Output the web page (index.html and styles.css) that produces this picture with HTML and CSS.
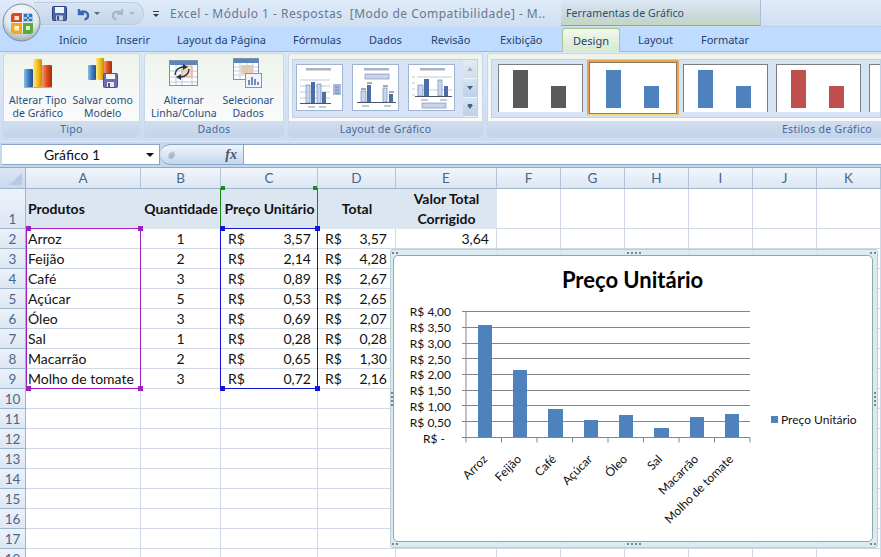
FILE: index.html
```html
<!DOCTYPE html>
<html lang="pt">
<head>
<meta charset="utf-8">
<title>Excel - Módulo 1 - Respostas</title>
<link rel="stylesheet" href="styles.css">
</head>
<body>
<div class="app">
  <div class="office-btn">
    <svg width="40" height="40" viewBox="0 0 40 40">
      <defs>
        <radialGradient id="orb" cx="50%" cy="30%" r="70%"><stop offset="0" stop-color="#fbfcfd"/><stop offset=".65" stop-color="#dfe6ec"/><stop offset="1" stop-color="#9fadb9"/></radialGradient>
      </defs>
      <circle cx="19.500" cy="19.500" r="18.500" fill="url(#orb)" stroke="#7d8c99"/>
      <path d="M9 13q0-3 3-3h8v9H9z" fill="#d9482b"/>
      <rect x="12.500" y="13" width="4.500" height="4" fill="#fbe6c4"/>
      <path d="M21 10h7q3 0 3 3v6H21z" fill="#9fc4e6"/>
      <path d="M22 11h3v3h-3zM27 11h3v3h-3zM25 14h2v2h-2zM22 16h3v2h-3zM27 16h3v2h-3z" fill="#2f75bb"/>
      <path d="M9 20h11v11h-8q-3 0-3-3z" fill="#f3a91f"/>
      <rect x="12.500" y="23" width="4.500" height="4.500" fill="#fff3c6"/>
      <path d="M21 20h10v8q0 3-3 3h-7z" fill="#5aaa3a"/>
      <rect x="24" y="23" width="4" height="4" fill="#dcf0cc"/>
    </svg>
  </div>

  <header class="titlebar">
    <div class="qat">
      <svg class="qat-save" width="15" height="15" viewBox="0 0 15 15"><rect x=".5" y=".5" width="14" height="14" rx="1" fill="#4667a8" stroke="#2b3f75"/><rect x="3" y="1" width="9" height="6" fill="#eef2fa"/><rect x="4" y="9.500" width="7" height="5" fill="#c7d0e4"/><rect x="5" y="10" width="2" height="4" fill="#3c5697"/></svg>
      <svg class="qat-undo" width="14" height="14" viewBox="0 0 14 14"><path d="M3 2v5h5M3.500 6.500C6 3.500 11.500 4 12 8c.3 2.500-1.500 4-3.500 4.500" fill="none" stroke="#3b68b0" stroke-width="2.400"/></svg>
      <span class="qat-caret"></span>
      <svg class="qat-redo" width="14" height="14" viewBox="0 0 14 14"><path d="M11 2v5H6M10.500 6.500C8 3.500 2.500 4 2 8c-.3 2.500 1.500 4 3.500 4.500" fill="none" stroke="#a5b7c9" stroke-width="2.200"/></svg>
      <span class="qat-caret qat-caret-off"></span>
    </div>
    <div class="qat-more"><span class="qat-bar"></span><span class="qat-caret qat-caret-dark"></span></div>
    <div class="doc-title">Excel - Módulo 1 - Respostas&nbsp; [Modo de Compatibilidade] - M..</div>
    <div class="context-title">Ferramentas de Gráfico</div>
    <div class="title-rest"></div>
  </header>

  <nav class="tabs">
    <span class="tab tab-inicio">Início</span>
    <span class="tab tab-inserir">Inserir</span>
    <span class="tab tab-layout-pg">Layout da Página</span>
    <span class="tab tab-formulas">Fórmulas</span>
    <span class="tab tab-dados">Dados</span>
    <span class="tab tab-revisao">Revisão</span>
    <span class="tab tab-exibicao">Exibição</span>
    <span class="tab tab-design">Design</span>
    <span class="tab tab-layout">Layout</span>
    <span class="tab tab-formatar">Formatar</span>
  </nav>

  <section class="ribbon">
    <div class="group group-tipo">
      <div class="group-body">
        <div class="big-btn">
          <svg width="30" height="30" viewBox="0 0 30 30">
            <defs>
              <linearGradient id="gb"><stop offset="0" stop-color="#8dbce6"/><stop offset=".5" stop-color="#3d7fc2"/><stop offset="1" stop-color="#1f4f8f"/></linearGradient>
              <linearGradient id="gy"><stop offset="0" stop-color="#fcec8a"/><stop offset=".5" stop-color="#f2c020"/><stop offset="1" stop-color="#c98a0a"/></linearGradient>
              <linearGradient id="gr"><stop offset="0" stop-color="#f59a6a"/><stop offset=".5" stop-color="#de4a1e"/><stop offset="1" stop-color="#a82c0c"/></linearGradient>
            </defs>
            <rect x="1" y="11" width="9" height="18" rx="1" fill="url(#gb)"/>
            <rect x="19" y="7" width="10" height="22" rx="1" fill="url(#gr)"/>
            <rect x="10" y="1" width="9" height="28" rx="1.500" fill="url(#gy)"/>
            <rect x="1" y="29" width="28" height="1" fill="#a8acb4"/>
          </svg>
          <span class="btn-label">Alterar Tipo<br>de Gráfico</span>
        </div>
        <div class="big-btn">
          <svg width="30" height="30" viewBox="0 0 30 30">
            <rect x="0" y="7" width="8" height="15" rx="1" fill="url(#gb)"/>
            <rect x="16" y="3" width="8" height="19" rx="1" fill="url(#gr)"/>
            <rect x="8" y="0" width="8" height="22" rx="1" fill="url(#gy)"/>
            <rect x="15.500" y="15.500" width="14" height="14" rx="1" fill="#6f6cb2" stroke="#514e92"/>
            <rect x="18" y="16" width="9" height="5" fill="#f4f4fb"/>
            <rect x="19" y="24" width="7" height="5" fill="#e8e8f2"/><rect x="20" y="25" width="2" height="4" fill="#57549a"/>
          </svg>
          <span class="btn-label">Salvar como<br>Modelo</span>
        </div>
      </div>
      <div class="group-label">Tipo</div>
    </div>

    <div class="group group-dados">
      <div class="group-body">
        <div class="big-btn">
          <svg width="30" height="30" viewBox="0 0 30 30">
            <rect x=".5" y="2.500" width="28" height="25" fill="#fff" stroke="#7d93ad"/>
            <rect x="1" y="3" width="27" height="4" fill="#5c86b8"/>
            <path d="M13 8h10v11H13z" fill="#fbdcbc"/>
            <path d="M1 13h27M1 19h27M1 24h27M7 7v20M13 7v20M23 7v20" stroke="#b9c8da" fill="none"/>
            <path d="M13 8h10v11H13z" fill="none" stroke="#f0b27a"/>
            <path d="M6 17c0-5 4-8 9-8" fill="none" stroke="#26364e" stroke-width="1.400"/><path d="M14 6l5 3-5 3z" fill="#26364e"/>
            <path d="M20 11c0 5-4 8-9 8" fill="none" stroke="#26364e" stroke-width="1.400"/><path d="M12 16l-5 3 5 3z" fill="#26364e"/>
          </svg>
          <span class="btn-label">Alternar<br>Linha/Coluna</span>
        </div>
        <div class="big-btn">
          <svg width="30" height="30" viewBox="0 0 30 30">
            <rect x=".5" y=".5" width="25" height="21" fill="#fff" stroke="#7d93ad"/>
            <rect x="1" y="1" width="24" height="4" fill="#5c86b8"/>
            <rect x="8" y="7" width="12" height="9" fill="#f9c996"/>
            <path d="M1 9h24M1 13h24M1 17h24M7 5v16M14 5v16M20 5v16" stroke="#c3cfde" fill="none"/>
            <rect x="12.500" y="15.500" width="16" height="14" fill="#f0f4fa" stroke="#8497af"/>
            <path d="M15 27v-5h2v5zM18 27v-8h2v8zM21 27v-6h2v6zM24 27v-3h2v3z" fill="#6f8fb8"/>
          </svg>
          <span class="btn-label">Selecionar<br>Dados</span>
        </div>
      </div>
      <div class="group-label">Dados</div>
    </div>

    <div class="group group-layout">
      <div class="group-body group-body-gallery">
        <div class="gallery gallery-layout">
          <div class="layout-thumb">
            <svg width="45" height="45" viewBox="0 0 45 45"><rect x="9" y="3" width="25" height="2.500" fill="#a9b4ca"/><path d="M3 15h30M3 21h30M3 27h30M3 33h30" stroke="#c3c9d6" fill="none"/><rect x="9" y="20" width="4" height="18" fill="#c9d6ec" stroke="#5f7fb5" stroke-width=".6"/><rect x="14" y="17" width="4" height="21" fill="#4b6ea8"/><rect x="20" y="19" width="4" height="19" fill="#c9d6ec" stroke="#5f7fb5" stroke-width=".6"/><rect x="25" y="27" width="4" height="11" fill="#4b6ea8"/><rect x="3" y="38" width="31" height="1" fill="#4c5565"/><path d="M11 42h7M22 42h7" stroke="#8b93a5"/><rect x="36" y="19" width="8" height="11" fill="#a9bad6"/><path d="M38 22h4M38 25h4M38 28h4" stroke="#5f7fb5" stroke-width=".8"/></svg>
          </div>
          <div class="layout-thumb">
            <svg width="45" height="45" viewBox="0 0 45 45"><rect x="11" y="3" width="25" height="2.500" fill="#a9b4ca"/><rect x="12" y="9" width="24" height="5" fill="#c8d5ec" stroke="#6f87b0" stroke-width=".6"/><rect x="8" y="26" width="5" height="11" fill="#c9d6ec" stroke="#5f7fb5" stroke-width=".6"/><rect x="14" y="20" width="4" height="17" fill="#4b6ea8"/><rect x="30" y="23" width="4" height="14" fill="#c9d6ec" stroke="#5f7fb5" stroke-width=".6"/><rect x="36" y="29" width="4" height="8" fill="#4b6ea8"/><rect x="4" y="37" width="39" height="1" fill="#4c5565"/><path d="M8 24h5M14 18h5M30 21h5M36 27h5" stroke="#4c5565"/><path d="M9 41h7M31 41h7" stroke="#8b93a5"/></svg>
          </div>
          <div class="layout-thumb">
            <svg width="45" height="45" viewBox="0 0 45 45"><rect x="11" y="3" width="25" height="2.500" fill="#a9b4ca"/><path d="M3 12h3M3 18h3M3 24h3M3 30h3M8 12h35M8 25h35" stroke="#c3c9d6" fill="none"/><rect x="9" y="20" width="5" height="11" fill="#c9d6ec" stroke="#5f7fb5" stroke-width=".6"/><rect x="15" y="14" width="5" height="17" fill="#4b6ea8"/><rect x="29" y="15" width="4" height="16" fill="#c9d6ec" stroke="#5f7fb5" stroke-width=".6"/><rect x="35" y="21" width="4" height="10" fill="#4b6ea8"/><rect x="6" y="31" width="37" height="1" fill="#4c5565"/><path d="M12 35h7M31 35h7" stroke="#8b93a5"/><rect x="13" y="38" width="24" height="5" fill="#c8d5ec" stroke="#6f87b0" stroke-width=".6"/></svg>
          </div>
          <div class="scroller">
            <span class="scroll-btn"><i class="tri tri-up"></i></span>
            <span class="scroll-btn scroll-btn-on"><i class="tri tri-down"></i></span>
            <span class="scroll-btn scroll-btn-on"><i class="tri tri-more"></i></span>
          </div>
        </div>
      </div>
      <div class="group-label">Layout de Gráfico</div>
    </div>

    <div class="group group-styles">
      <div class="group-body group-body-gallery">
        <div class="gallery gallery-styles">
          <div class="style-thumb"><span class="bar bar-hi bar-gray"></span><span class="bar bar-lo bar-gray"></span></div>
          <div class="style-thumb style-selected"><span class="bar bar-hi bar-blue"></span><span class="bar bar-lo bar-blue"></span></div>
          <div class="style-thumb"><span class="bar bar-hi bar-blue"></span><span class="bar bar-lo bar-blue"></span></div>
          <div class="style-thumb"><span class="bar bar-hi bar-red"></span><span class="bar bar-lo bar-red"></span></div>
          <div class="style-thumb"></div>
        </div>
      </div>
      <div class="group-label group-label-right">Estilos de Gráfico</div>
    </div>
  </section>

  <section class="formula-bar">
    <div class="name-box"><span class="name-text">Gráfico 1</span><i class="name-caret"></i></div>
    <div class="fx-box"><i class="fx-dot"></i><span class="fx">fx</span></div>
    <div class="formula-input"></div>
  </section>

  <main class="sheet">
    <div class="grid">
      <div class="corner"><i class="corner-tri"></i></div>
      <div class="ch">A</div><div class="ch">B</div><div class="ch">C</div><div class="ch">D</div><div class="ch">E</div><div class="ch">F</div><div class="ch">G</div><div class="ch">H</div><div class="ch">I</div><div class="ch">J</div><div class="ch">K</div>

      <div class="rh rh-tall">1</div>
      <div class="c hd hd-left">Produtos</div><div class="c hd">Quantidade</div><div class="c hd">Preço Unitário</div><div class="c hd">Total</div><div class="c hd hd-wrap">Valor Total<br>Corrigido</div><div class="c"></div><div class="c"></div><div class="c"></div><div class="c"></div><div class="c"></div><div class="c"></div>

      <div class="rh">2</div><div class="c">Arroz</div><div class="c ctr">1</div><div class="c cur"><span>R$</span><span>3,57</span></div><div class="c cur cur-d"><span>R$</span><span>3,57</span></div><div class="c num">3,64</div><div class="c"></div><div class="c"></div><div class="c"></div><div class="c"></div><div class="c"></div><div class="c"></div>
      <div class="rh">3</div><div class="c">Feijão</div><div class="c ctr">2</div><div class="c cur"><span>R$</span><span>2,14</span></div><div class="c cur cur-d"><span>R$</span><span>4,28</span></div><div class="c num"></div><div class="c"></div><div class="c"></div><div class="c"></div><div class="c"></div><div class="c"></div><div class="c"></div>
      <div class="rh">4</div><div class="c">Café</div><div class="c ctr">3</div><div class="c cur"><span>R$</span><span>0,89</span></div><div class="c cur cur-d"><span>R$</span><span>2,67</span></div><div class="c num"></div><div class="c"></div><div class="c"></div><div class="c"></div><div class="c"></div><div class="c"></div><div class="c"></div>
      <div class="rh">5</div><div class="c">Açúcar</div><div class="c ctr">5</div><div class="c cur"><span>R$</span><span>0,53</span></div><div class="c cur cur-d"><span>R$</span><span>2,65</span></div><div class="c num"></div><div class="c"></div><div class="c"></div><div class="c"></div><div class="c"></div><div class="c"></div><div class="c"></div>
      <div class="rh">6</div><div class="c">Óleo</div><div class="c ctr">3</div><div class="c cur"><span>R$</span><span>0,69</span></div><div class="c cur cur-d"><span>R$</span><span>2,07</span></div><div class="c num"></div><div class="c"></div><div class="c"></div><div class="c"></div><div class="c"></div><div class="c"></div><div class="c"></div>
      <div class="rh">7</div><div class="c">Sal</div><div class="c ctr">1</div><div class="c cur"><span>R$</span><span>0,28</span></div><div class="c cur cur-d"><span>R$</span><span>0,28</span></div><div class="c num"></div><div class="c"></div><div class="c"></div><div class="c"></div><div class="c"></div><div class="c"></div><div class="c"></div>
      <div class="rh">8</div><div class="c">Macarrão</div><div class="c ctr">2</div><div class="c cur"><span>R$</span><span>0,65</span></div><div class="c cur cur-d"><span>R$</span><span>1,30</span></div><div class="c num"></div><div class="c"></div><div class="c"></div><div class="c"></div><div class="c"></div><div class="c"></div><div class="c"></div>
      <div class="rh">9</div><div class="c">Molho de tomate</div><div class="c ctr">3</div><div class="c cur"><span>R$</span><span>0,72</span></div><div class="c cur cur-d"><span>R$</span><span>2,16</span></div><div class="c num"></div><div class="c"></div><div class="c"></div><div class="c"></div><div class="c"></div><div class="c"></div><div class="c"></div>

      <div class="rh">10</div><div class="c"></div><div class="c"></div><div class="c"></div><div class="c"></div><div class="c"></div><div class="c"></div><div class="c"></div><div class="c"></div><div class="c"></div><div class="c"></div><div class="c"></div>
      <div class="rh">11</div><div class="c"></div><div class="c"></div><div class="c"></div><div class="c"></div><div class="c"></div><div class="c"></div><div class="c"></div><div class="c"></div><div class="c"></div><div class="c"></div><div class="c"></div>
      <div class="rh">12</div><div class="c"></div><div class="c"></div><div class="c"></div><div class="c"></div><div class="c"></div><div class="c"></div><div class="c"></div><div class="c"></div><div class="c"></div><div class="c"></div><div class="c"></div>
      <div class="rh">13</div><div class="c"></div><div class="c"></div><div class="c"></div><div class="c"></div><div class="c"></div><div class="c"></div><div class="c"></div><div class="c"></div><div class="c"></div><div class="c"></div><div class="c"></div>
      <div class="rh">14</div><div class="c"></div><div class="c"></div><div class="c"></div><div class="c"></div><div class="c"></div><div class="c"></div><div class="c"></div><div class="c"></div><div class="c"></div><div class="c"></div><div class="c"></div>
      <div class="rh">15</div><div class="c"></div><div class="c"></div><div class="c"></div><div class="c"></div><div class="c"></div><div class="c"></div><div class="c"></div><div class="c"></div><div class="c"></div><div class="c"></div><div class="c"></div>
      <div class="rh">16</div><div class="c"></div><div class="c"></div><div class="c"></div><div class="c"></div><div class="c"></div><div class="c"></div><div class="c"></div><div class="c"></div><div class="c"></div><div class="c"></div><div class="c"></div>
      <div class="rh">17</div><div class="c"></div><div class="c"></div><div class="c"></div><div class="c"></div><div class="c"></div><div class="c"></div><div class="c"></div><div class="c"></div><div class="c"></div><div class="c"></div><div class="c"></div>
      <div class="rh">18</div><div class="c"></div><div class="c"></div><div class="c"></div><div class="c"></div><div class="c"></div><div class="c"></div><div class="c"></div><div class="c"></div><div class="c"></div><div class="c"></div><div class="c"></div>
    </div>

    <div class="sel sel-green"><i class="h h-tl"></i><i class="h h-tr"></i></div>
    <div class="sel sel-purple"><i class="h h-tl"></i><i class="h h-tr"></i><i class="h h-bl"></i><i class="h h-br"></i></div>
    <div class="sel sel-blue"><i class="h h-tl"></i><i class="h h-tr"></i><i class="h h-bl"></i><i class="h h-br"></i></div>

    <div class="chart">
      <svg class="chart-svg" width="491" height="302" viewBox="388 248 491 302">
        <text class="ct-title" x="632.500" y="288" text-anchor="middle">Preço Unitário</text>
        <g class="grid-lines">
          <path d="M466 311.500H750M466 327.500H750M466 343.500H750M466 358.500H750M466 374.500H750M466 390.500H750M466 405.500H750M466 421.500H750"/>
          <path class="axis" d="M466 311V437.500H750M466 437.500v5M501.500 437.500v5M537 437.500v5M572.500 437.500v5M608 437.500v5M643.500 437.500v5M679 437.500v5M714.500 437.500v5M750 437.500v5"/>
          <path class="axis" d="M462 311.500h4M462 327.500h4M462 343.500h4M462 358.500h4M462 374.500h4M462 390.500h4M462 405.500h4M462 421.500h4M462 437.500h4"/>
        </g>
        <g class="bars">
          <rect x="478" y="325" width="14" height="112"/>
          <rect x="513" y="370" width="14" height="67"/>
          <rect x="548" y="409" width="15" height="28"/>
          <rect x="584" y="420" width="14" height="17"/>
          <rect x="619" y="415" width="14" height="22"/>
          <rect x="654" y="428" width="15" height="9"/>
          <rect x="690" y="417" width="14" height="20"/>
          <rect x="725" y="414" width="14" height="23"/>
        </g>
        <g class="y-labels" text-anchor="end">
          <text x="451" y="316">R$ 4,00</text><text x="451" y="332">R$ 3,50</text><text x="451" y="348">R$ 3,00</text><text x="451" y="364">R$ 2,50</text><text x="451" y="379">R$ 2,00</text><text x="451" y="395">R$ 1,50</text><text x="451" y="411">R$ 1,00</text><text x="451" y="427">R$ 0,50</text><text x="445" y="443">R$ -</text>
        </g>
        <g class="x-labels" text-anchor="end">
          <text transform="translate(488 460) rotate(-45)">Arroz</text>
          <text transform="translate(522 460) rotate(-45)">Feijão</text>
          <text transform="translate(557 460) rotate(-45)">Café</text>
          <text transform="translate(593 460) rotate(-45)">Açúcar</text>
          <text transform="translate(628 460) rotate(-45)">Óleo</text>
          <text transform="translate(663 460) rotate(-45)">Sal</text>
          <text transform="translate(699 460) rotate(-45)">Macarrão</text>
          <text transform="translate(734 460) rotate(-45)">Molho de tomate</text>
        </g>
        <rect class="legend-key" x="771" y="416" width="7" height="7"/>
        <text class="legend-text" x="781" y="424">Preço Unitário</text>
      </svg>
      <i class="grip grip-top"></i><i class="grip grip-bottom"></i><i class="grip grip-left"></i><i class="grip grip-right"></i>
      <i class="gripc gripc-tl"></i><i class="gripc gripc-tr"></i><i class="gripc gripc-bl"></i><i class="gripc gripc-br"></i>
    </div>
  </main>
</div>
</body>
</html>
```
FILE: styles.css
```css
* { box-sizing: border-box; }
html, body { margin: 0; padding: 0; }
body { width: 881px; height: 557px; overflow: hidden; background: #fff; }
.app { position: relative; width: 881px; height: 557px; overflow: hidden; font-family: "Noto Sans", sans-serif; font-size: 11px; display: flex; flex-direction: column; }

.office-btn { position: absolute; left: 2px; top: 3px; width: 40px; height: 40px; z-index: 3; }

.titlebar { height: 27px; display: flex; align-items: center; background: linear-gradient(#dfebf9, #cfdff3); flex: none; }
.qat { margin-left: 34px; width: 110px; height: 23px; padding-left: 18px; display: flex; align-items: center; gap: 4px; background: linear-gradient(#d8e4f3, #c4d6ec); border: 1px solid #b9cde5; border-left: 0; border-radius: 0 12px 12px 0; }
.qat-undo { margin-left: 5px; }
.qat-redo { margin-left: 7px; }
.qat-caret { width: 0; height: 0; border: 3px solid transparent; border-top: 3px solid #4a6a9a; border-bottom: 0; }
.qat-caret-off { border-top-color: #a5b7c9; }
.qat-caret-dark { border-top-color: #2c3e55; }
.qat-more { width: 12px; margin-left: 6px; display: flex; flex-direction: column; align-items: center; gap: 2px; }
.qat-bar { width: 6px; height: 1px; background: #2c3e55; }
.doc-title { width: 391px; margin-left: 8px; font-size: 12px; letter-spacing: .48px; color: #69798c; white-space: nowrap; overflow: hidden; }
.context-title { width: 200px; height: 26px; align-self: flex-start; padding: 6px 0 0 5px; font-size: 10.500px; color: #2c4c78; background: linear-gradient(#dce8f5, #c8d7d6 70%, #c3d8bf); border-bottom: 1px solid #87b765; border-right: 1px solid #a9bdd3; letter-spacing: .1px; }
.title-rest { flex: 1; align-self: stretch; border-bottom: 1px solid #b8cee6; }

.tabs { height: 25px; display: flex; align-items: center; background: #bfdbff; flex: none; position: relative; border-bottom: 1px solid #a8c0a0; color: #24426f; }
.tab { position: absolute; top: 5px; white-space: nowrap; }
.tab-inicio { left: 59px; }
.tab-inserir { left: 116px; }
.tab-layout-pg { left: 177px; }
.tab-formulas { left: 293px; }
.tab-dados { left: 369px; }
.tab-revisao { left: 431px; }
.tab-exibicao { left: 500px; }
.tab-design { left: 562px; top: 1px; width: 58px; height: 24px; padding-top: 4px; text-align: center; background: linear-gradient(#f2f8ee, #d7e9cd); border: 1px solid #a5c396; border-bottom: 0; border-radius: 3px 3px 0 0; }
.tab-layout { left: 638px; }
.tab-formatar { left: 701px; }

.ribbon { height: 89px; flex: none; display: flex; gap: 4px; padding: 1px 0 3px 3px; background: linear-gradient(#dbe8f7, #cddcf0); }
.group { display: flex; flex-direction: column; border: 1px solid #c8d7ea; border-radius: 3px; background: linear-gradient(#eef4ea, #f6f8f8 50%, #fbfcfd); overflow: hidden; }
.group-tipo { width: 137px; }
.group-dados { width: 140px; }
.group-layout { width: 195px; }
.group-styles { flex: 1; border-right: 0; border-radius: 3px 0 0 3px; }
.group-body { flex: 1; display: flex; align-items: flex-start; gap: 6px; padding-top: 4px; min-height: 0; }
.group-tipo .group-body { padding-left: 5px; }
.group-dados .group-body { padding-left: 6px; }
.group-body-gallery { padding: 5px 0 0 3px; }
.group-label { height: 16px; flex: none; background: linear-gradient(#d1deef, #c3d4e9); color: #46689c; text-align: center; line-height: 17px; font-size: 10.500px; letter-spacing: .3px; }
.group-label-right { text-align: right; padding-right: 9px; }

.big-btn { display: flex; flex-direction: column; align-items: center; color: #2d4d7b; font-size: 10.500px; line-height: 13px; text-align: center; white-space: nowrap; }
.big-btn svg { margin-bottom: 6px; display: block; }
.btn-label { display: block; }

.gallery { height: 59px; display: flex; background: #d6e3f5; border: 1px solid #c1d2e6; }
.gallery-layout { width: 186px; padding: 4px 0 0 3px; gap: 9px; position: relative; }
.layout-thumb { width: 47px; height: 47px; background: #fff; border: 1px solid #9fb5d2; }
.layout-thumb svg { display: block; }
.scroller { display: flex; flex-direction: column; position: absolute; right: 0; top: 0; width: 14px; height: 57px; }
.scroll-btn { flex: 1; display: flex; align-items: center; justify-content: center; background: linear-gradient(#e3eaf3, #d3deec); border-bottom: 1px solid #eef4fa; }
.scroll-btn-on { background: linear-gradient(#d6e3f3, #bdd0e9); }
.tri { width: 0; height: 0; border: 3px solid transparent; }
.tri-up { border-top: 0; border-bottom: 4px solid #a8b8cc; }
.tri-down { border-bottom: 0; border-top: 4px solid #44628c; }
.tri-more { border-bottom: 0; border-top: 4px solid #44628c; box-shadow: 0 -2px 0 -1px #44628c; }

.gallery-styles { flex: 1; padding: 4px 0 0 6px; position: relative; overflow: hidden; gap: 8px; }
.style-thumb { position: relative; flex: none; width: 85px; height: 48px; background: #fff; border: 1px solid #7d7d7d; border-bottom: 0; }
.style-selected { width: 92px; height: 56px; margin: -4px -4px 0 -4px; border: 2px solid #e9a24e; border-bottom-color: #fbd878; border-radius: 2px; box-shadow: inset 0 0 0 1px #8a7a60; }
.bar { position: absolute; width: 15px; }
.bar-hi { left: 14px; top: 5px; height: 38px; }
.bar-lo { left: 52px; top: 21px; height: 22px; }
.style-selected .bar-hi { left: 17px; top: 8px; }
.style-selected .bar-lo { left: 55px; top: 24px; }
.bar-gray { background: #5a5a5a; }
.bar-blue { background: #4f81bd; }
.bar-red { background: #c0504d; }

.formula-bar { height: 27px; flex: none; display: flex; align-items: stretch; padding: 2px 0 3px 0; background: #c5d8ee; border-top: 1px solid #dbe8f7; }
.name-box { width: 159px; margin-left: 1px; background: #fff; border: 1px solid #8aa4c4; border-left-color: #c5d8ee; position: relative; font-family: Lato, sans-serif; font-size: 14px; line-height: 20px; color: #111; padding-left: 42px; }
.name-caret { position: absolute; right: 5px; top: 8px; width: 0; height: 0; border: 4px solid transparent; border-top: 4px solid #111; border-bottom: 0; }
.fx-box { width: 84px; background: linear-gradient(#eff5fc, #c4d7ee); border: 1px solid #8aa4c4; border-left: 0; border-radius: 11px 0 0 11px; position: relative; }
.fx-dot { position: absolute; left: 6px; top: 5px; width: 9px; height: 9px; border-radius: 50%; background: #a9b9c9; box-shadow: inset 2px 2px 2px #eef2f6; }
.fx { position: absolute; right: 6px; top: 0; font-family: "Liberation Serif", serif; font-style: italic; font-weight: 700; font-size: 14px; color: #4a5568; line-height: 19px; }
.formula-input { flex: 1; background: #fff; border: 1px solid #8aa4c4; border-left: 0; border-right: 0; }

.sheet { position: relative; flex: 1; min-height: 0; overflow: hidden; border-top: 1px solid #8fa9c7; margin-top: -1px; background: #fff; }
.grid { display: grid; grid-template-columns: 26px 115px 80px 97px 78px 101px 64px 64px 64px 64px 64px 64px; grid-template-rows: 21px 40px repeat(16, 20px); font-family: Lato, sans-serif; font-size: 14px; color: #111; }
.corner { background: linear-gradient(#dbe6f3, #c9d9ec); border-right: 1px solid #9eb6ce; border-bottom: 1px solid #9eb6ce; position: relative; }
.corner-tri { position: absolute; right: 3px; bottom: 3px; width: 0; height: 0; border-left: 13px solid transparent; border-bottom: 12px solid #b7cae0; }
.ch { background: linear-gradient(#f2f6fb, #dbe6f3); border-right: 1px solid #b0c3d9; border-bottom: 1px solid #9eb6ce; text-align: center; line-height: 20px; color: #4c6688; font-size: 13.500px; }
.rh { background: linear-gradient(#ecf2f9, #dde7f3); border-right: 1px solid #9eb6ce; border-bottom: 1px solid #9eb6ce; text-align: center; line-height: 20px; color: #4c6688; font-size: 13.500px; }
.rh-tall { padding-top: 20px; }
.c { border-right: 1px solid #d0d7e5; border-bottom: 1px solid #d0d7e5; padding: 0 2px; line-height: 20px; white-space: nowrap; overflow: hidden; }
.hd { background: #dce6f1; font-weight: 700; text-align: center; line-height: 40px; border-right: 0; border-bottom: 0; padding: 0; }
.hd-left { text-align: left; padding-left: 2px; }
.hd-wrap { line-height: 20px; }
.ctr { text-align: center; }
.num { text-align: right; padding-right: 7px; }
.cur { display: flex; justify-content: space-between; padding: 0 6px 0 7px; }
.cur-d { padding: 0 8px 0 7px; }

.sel { position: absolute; pointer-events: none; }
.sel-green { left: 220px; top: 20px; width: 98px; height: 41px; border-left: 1px solid #1a8a1a; border-right: 1px solid #1a8a1a; }
.sel-purple { left: 26px; top: 60px; width: 115px; height: 161px; border: 1px solid #a01fc0; }
.sel-blue { left: 220px; top: 60px; width: 98px; height: 161px; border: 1px solid #1414d8; }
.h { position: absolute; width: 5px; height: 5px; }
.sel-green .h { background: #1a8a1a; width: 4px; height: 4px; }
.sel-purple .h { background: #a01fc0; }
.sel-blue .h { background: #1414d8; }
.h-tl { left: -1px; top: -3px; }
.h-tr { right: -3px; top: -3px; }
.h-bl { left: -1px; bottom: -3px; }
.h-br { right: -3px; bottom: -3px; }
.sel-green .h-tl { left: 0; top: -2px; }
.sel-green .h-tr { right: 0; top: -2px; }

.chart { position: absolute; left: 390px; top: 81px; width: 488px; height: 299px; background: rgba(214, 232, 240, .85); border: 1px solid #b9cfd6; border-radius: 3px; }
.chart::before { content: ""; position: absolute; left: 2px; top: 5px; right: 4px; bottom: 5px; background: #fff; border: 1px solid #8ea8ad; border-radius: 5px; }
.chart-svg { position: absolute; left: -3px; top: -2px; font-family: Lato, sans-serif; }
.ct-title { font-size: 22px; font-weight: 700; fill: #000; }
.grid-lines path { stroke: #868686; fill: none; stroke-width: 1; }
.bars rect { fill: #4f81bd; }
.y-labels text, .x-labels text, .legend-text { font-size: 12px; fill: #111; }
.legend-key { fill: #4f81bd; }
.grip { position: absolute; background-image: radial-gradient(circle, #6f8a98 1px, transparent 1.200px); }
.grip-top, .grip-bottom { left: 50%; margin-left: -8px; width: 16px; height: 4px; background-size: 4px 4px; }
.grip-top { top: 1px; }
.grip-bottom { bottom: 1px; }
.grip-left, .grip-right { top: 50%; margin-top: -8px; width: 4px; height: 16px; background-size: 4px 4px; }
.grip-left { left: -1px; }
.grip-right { right: 0; }
.gripc { position: absolute; width: 8px; height: 4px; background-image: radial-gradient(circle, #6f8a98 1px, transparent 1.200px); background-size: 4px 4px; }
.gripc-tl { left: 0; top: 1px; }
.gripc-tr { right: 0; top: 1px; }
.gripc-bl { left: 0; bottom: 1px; }
.gripc-br { right: 0; bottom: 1px; }
```
